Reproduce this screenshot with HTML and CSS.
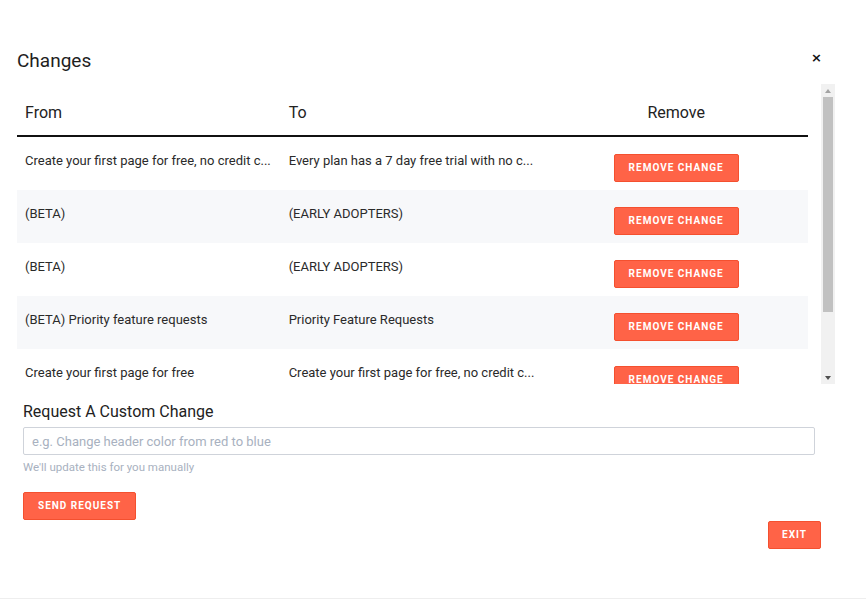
FILE: index.html
```html
<!DOCTYPE html>
<html lang="en">
<head>
<meta charset="utf-8">
<title>Changes</title>
<link rel="stylesheet" href="styles.css">
</head>
<body>
<div class="modal">
  <div class="modal-head">
    <h2 class="modal-title">Changes</h2>
    <button class="close" type="button" aria-label="Close">&times;</button>
  </div>

  <div class="changes-box">
    <div class="changes-view">
      <div class="changes">
        <div class="row head">
          <div class="cell">From</div>
          <div class="cell">To</div>
          <div class="cell center">Remove</div>
        </div>
        <div class="row">
          <div class="cell">Create your first page for free, no credit c...</div>
          <div class="cell">Every plan has a 7 day free trial with no c...</div>
          <div class="cell center"><button class="btn" type="button">Remove change</button></div>
        </div>
        <div class="row alt">
          <div class="cell">(BETA)</div>
          <div class="cell">(EARLY ADOPTERS)</div>
          <div class="cell center"><button class="btn" type="button">Remove change</button></div>
        </div>
        <div class="row">
          <div class="cell">(BETA)</div>
          <div class="cell">(EARLY ADOPTERS)</div>
          <div class="cell center"><button class="btn" type="button">Remove change</button></div>
        </div>
        <div class="row alt">
          <div class="cell">(BETA) Priority feature requests</div>
          <div class="cell">Priority Feature Requests</div>
          <div class="cell center"><button class="btn" type="button">Remove change</button></div>
        </div>
        <div class="row">
          <div class="cell">Create your first page for free</div>
          <div class="cell">Create your first page for free, no credit c...</div>
          <div class="cell center"><button class="btn" type="button">Remove change</button></div>
        </div>
      </div>
    </div>

    <!-- vertical scrollbar of the changes list -->
    <div class="scrollbar" aria-hidden="true">
      <div class="sb-btn"><span class="tri up"></span></div>
      <div class="sb-track"><div class="sb-thumb"></div></div>
      <div class="sb-btn"><span class="tri down"></span></div>
    </div>
  </div>

  <div class="request">
    <h3 class="request-title">Request A Custom Change</h3>
    <input class="request-input" type="text" placeholder="e.g. Change header color from red to blue">
    <p class="hint">We'll update this for you manually</p>
    <button class="btn" type="button">Send request</button>
  </div>

  <div class="footer">
    <button class="btn exit" type="button">Exit</button>
  </div>
</div>
</body>
</html>
```

FILE: styles.css
```css
* { box-sizing: border-box; }

html, body {
  margin: 0;
  background: #fff;
}

body {
  font-family: Roboto, "Liberation Sans", sans-serif;
  color: #222;
  width: 866px;
  height: 600px;
  overflow: hidden;
}

.modal {
  height: 599px;
  border-bottom: 1px solid #eeeeee;
  padding: 47px 31px 0 17px;
}

.modal-head {
  display: flex;
  align-items: center;
  justify-content: space-between;
  height: 28px;
}

.modal-title {
  margin: 0;
  font-size: 19px;
  font-weight: 400;
  line-height: 28px;
  color: #1e1e1e;
}

.close {
  border: 0;
  background: none;
  padding: 0;
  margin: -6px 13px 0 0;
  font-family: "DejaVu Sans", sans-serif;
  font-size: 13px;
  font-weight: 700;
  line-height: 14px;
  color: #111;
  cursor: pointer;
}

/* list + its scrollbar */
.changes-box {
  display: flex;
  gap: 13px;
  margin-top: 9px;
  height: 300px;
}

.changes-view {
  width: 791px;
  height: 300px;
  overflow: hidden;
}

.row {
  display: grid;
  grid-template-columns: 1fr 1fr 1fr;
  height: 53px;
}

.row.alt { background: #f7f8fa; }

.row.head {
  border-bottom: 2px solid #111;
}

.cell {
  padding: 14px 8px 0;
  font-size: 13px;
  line-height: 20px;
  white-space: nowrap;
  overflow: hidden;
  color: #2a2a2a;
}

.row.head .cell {
  padding-top: 19px;
  font-size: 16px;
  line-height: 20px;
  color: #222;
}

.cell.center {
  text-align: center;
  padding-top: 17px;
}

.scrollbar {
  width: 14px;
  height: 300px;
  display: flex;
  flex-direction: column;
  background: #f1f1f1;
}

.sb-btn {
  height: 13px;
  display: flex;
  align-items: center;
  justify-content: center;
}

.sb-track {
  flex: 1;
  padding: 0 2px;
}

.sb-thumb {
  height: 215px;
  background: #c1c1c1;
}

.tri {
  width: 0;
  height: 0;
  border-left: 3.5px solid transparent;
  border-right: 3.5px solid transparent;
}

.tri.up { border-bottom: 4px solid #a3a3a3; }
.tri.down { border-top: 4px solid #505050; }

.btn {
  display: inline-block;
  height: 28px;
  padding: 0 14px;
  border: 1px solid #f4502f;
  border-radius: 2px;
  background: #ff6347;
  color: #fff;
  font-family: Roboto, "Liberation Sans", sans-serif;
  font-size: 10px;
  font-weight: 700;
  letter-spacing: 1px;
  text-transform: uppercase;
  line-height: 26px;
  cursor: pointer;
}

.request {
  padding: 0 20px 0 6px;
}

.request-title {
  margin: 16px 0 0;
  font-size: 16px;
  font-weight: 400;
  line-height: 24px;
  color: #222;
}

.request-input {
  display: block;
  width: 100%;
  height: 28px;
  margin-top: 3px;
  padding: 0 8px;
  border: 1px solid #cfd3da;
  border-radius: 2px;
  font-family: Roboto, "Liberation Sans", sans-serif;
  font-size: 13px;
  color: #333;
}

.request-input::placeholder { color: #a8b1c0; }

.hint {
  margin: 4px 0 17px;
  font-size: 11.5px;
  line-height: 16px;
  color: #a8b1c0;
}

.footer {
  display: flex;
  justify-content: flex-end;
  padding-right: 14px;
  margin-top: 1px;
}

.exit { padding: 0 13px; }
```
